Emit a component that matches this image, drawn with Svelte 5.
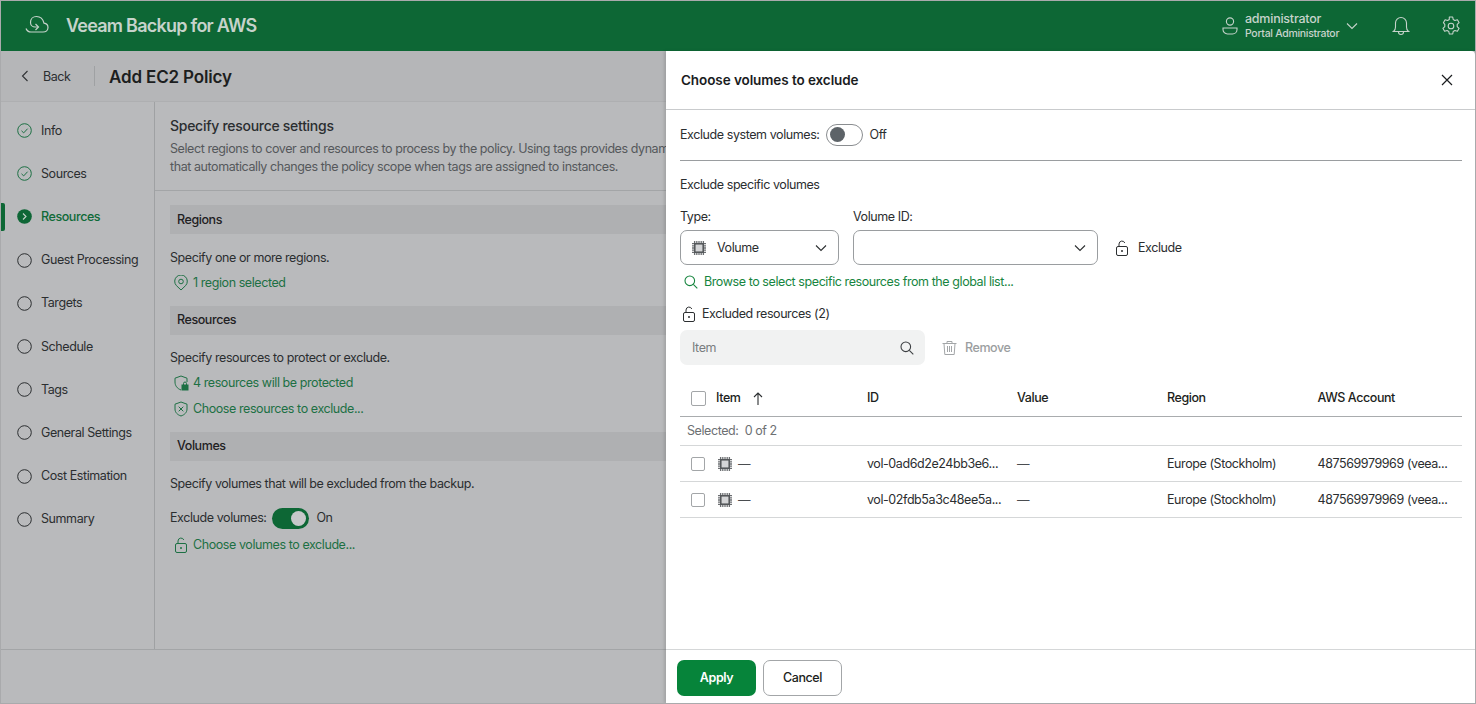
<script>
  const steps = [
    { label: 'Info', state: 'done' },
    { label: 'Sources', state: 'done' },
    { label: 'Resources', state: 'active' },
    { label: 'Guest Processing', state: '' },
    { label: 'Targets', state: '' },
    { label: 'Schedule', state: '' },
    { label: 'Tags', state: '' },
    { label: 'General Settings', state: '' },
    { label: 'Cost Estimation', state: '' },
    { label: 'Summary', state: '' }
  ];
  const rows = [
    { id: 'vol-0ad6d2e24bb3e6...' },
    { id: 'vol-02fdb5a3c48ee5a...' }
  ];
</script>

{#snippet chip()}
  <svg class="ic" width="16" height="16" viewBox="0 0 16 16" fill="none">
    <path d="M3.500 1v2.500M5.300 1v2.500M7.100 1v2.500M8.900 1v2.500M10.700 1v2.500M12.500 1v2.500M3.500 12.500V15M5.300 12.500V15M7.100 12.500V15M8.900 12.500V15M10.700 12.500V15M12.500 12.500V15M1 3.500h2.500M1 5.300h2.500M1 7.100h2.500M1 8.900h2.500M1 10.700h2.500M1 12.500h2.500M12.500 3.500H15M12.500 5.300H15M12.500 7.100H15M12.500 8.900H15M12.500 10.700H15M12.500 12.500H15" stroke="#6b6e71" stroke-width="1.100"/>
    <rect x="3.800" y="3.800" width="8.400" height="8.400" stroke="#4f5255" stroke-width="1.500" fill="#d4d5d7"/>
  </svg>
{/snippet}

{#snippet lock(color)}
  <svg class="ic" width="16" height="16" viewBox="0 0 16 16" fill="none" stroke={color}>
    <rect x="2.500" y="6.500" width="11" height="9" rx="1.500"/>
    <path d="M5 6.500V4a3 3 0 0 1 5.800-1"/>
    <circle cx="8" cy="11" r="1" fill={color} stroke="none"/>
  </svg>
{/snippet}

{#snippet chevron(color)}
  <svg class="ic" width="12" height="8" viewBox="0 0 12 8" fill="none" stroke={color} stroke-width="1.100"><path d="M1 1.500l5 5 5-5"/></svg>
{/snippet}

{#snippet search(color)}
  <svg class="ic" width="14" height="14" viewBox="0 0 14 14" fill="none" stroke={color} stroke-width="1.100"><circle cx="5.800" cy="5.800" r="4.800"/><path d="M9.300 9.300l4 4"/></svg>
{/snippet}

<div class="app">
  <header class="top">
    <svg class="logo" width="26" height="22" viewBox="0 0 26 22" fill="none" stroke="#c6d3cb" stroke-width="1.200">
      <path d="M1 13.500C2 16 3.500 17 6 17h12c3 0 5-2 5-4.500 0-2.500-1.800-4-4-4.300C18 4 15 1.500 11.500 1.500 8 1.500 5.500 4 5.500 7.500 5.500 10.500 8 12 10 12h3"/>
      <path d="M10.500 9l3 3-3 3"/>
    </svg>
    <div class="brand">Veeam Backup for AWS</div>
    <div class="user">
      <svg width="16" height="18" viewBox="0 0 16 18" fill="none" stroke="#c6d3cb" stroke-width="1.100">
        <circle cx="8" cy="4.500" r="3.600"/>
        <path d="M1 11h14v1.500a4.500 4.500 0 0 1-4.500 4.500h-5A4.500 4.500 0 0 1 1 12.500z"/>
      </svg>
      <div class="who">
        <div class="name">administrator</div>
        <div class="role">Portal Administrator</div>
      </div>
      {@render chevron('#c6d3cb')}
    </div>
    <svg class="bell" width="18" height="20" viewBox="0 0 18 20" fill="none" stroke="#c6d3cb" stroke-width="1.100">
      <path d="M1.500 15.500c1.500-1 2-2 2-4.500V7a5.500 5.500 0 0 1 11 0v4c0 2.500.5 3.500 2 4.500z"/>
      <path d="M6.500 15.500v.5a2.500 2.500 0 0 0 5 0v-.5"/>
    </svg>
    <svg class="gear" width="20" height="20" viewBox="0 0 20 20" fill="none" stroke="#c6d3cb" stroke-width="1.100">
      <circle cx="10" cy="10" r="2.800"/>
      <path d="M8.300 1h3.400l.5 2.500 1.700 1 2.500-.8 1.700 3-1.900 1.700v2.200l1.900 1.700-1.700 3-2.500-.8-1.700 1-.5 2.500H8.300l-.5-2.500-1.700-1-2.500.8-1.700-3 1.900-1.700V8.400L2.400 6.700l1.700-3 2.500.8 1.700-1z" stroke-linejoin="round"/>
    </svg>
  </header>

  <div class="sub">
    <div class="back">
      <svg width="8" height="12" viewBox="0 0 8 12" fill="none" stroke="#2f3234" stroke-width="1.100"><path d="M6.500 1L1.500 6l5 5"/></svg>
      <span>Back</span>
    </div>
    <div class="sep"></div>
    <h1>Add EC2 Policy</h1>
  </div>

  <div class="body">
    <nav class="side">
      {#each steps as s}
        <div class="step {s.state}">
          {#if s.state === 'done'}
            <svg width="15" height="15" viewBox="0 0 15 15" fill="none" stroke="#1d7044"><circle cx="7.500" cy="7.500" r="6.800"/><path d="M4.500 7.800l2.200 2.100 3.900-4.200"/></svg>
          {:else if s.state === 'active'}
            <svg width="15" height="15" viewBox="0 0 15 15"><circle cx="7.500" cy="7.500" r="7.300" fill="#0e6636"/><path d="M6 4.500l3 3-3 3" fill="none" stroke="#c6d3cb" stroke-width="1.100"/></svg>
          {:else}
            <svg width="15" height="15" viewBox="0 0 15 15" fill="none" stroke="#2c2f31"><circle cx="7.500" cy="7.500" r="6.800"/></svg>
          {/if}
          <span>{s.label}</span>
        </div>
      {/each}
    </nav>

    <main class="main">
      <div class="intro">
        <h2>Specify resource settings</h2>
        <p>Select regions to cover and resources to process by the policy. Using tags provides dynamic protection scope<br/>that automatically changes the policy scope when tags are assigned to instances.</p>
      </div>
      <div class="form">
        <div class="bar">Regions</div>
        <div class="line lead">Specify one or more regions.</div>
        <div class="link first">
          <svg width="16" height="16" viewBox="0 0 16 16" fill="none" stroke="#1d7044"><path d="M8 15l-4.700-4.500a6.300 6.300 0 1 1 9.400 0z"/><circle cx="8" cy="6.500" r="2.300"/></svg>
          1 region selected
        </div>
        <div class="bar b2">Resources</div>
        <div class="line">Specify resources to protect or exclude.</div>
        <div class="link first">
          <svg width="16" height="16" viewBox="0 0 16 16" fill="none" stroke="#1d7044"><path d="M8 1l6 2.200V7M8 15C4 13.500 2 10.500 2 7V3.200L8 1"/><rect x="9" y="10" width="6" height="5" fill="#1d7044"/><path d="M10.500 10V8.500a1.500 1.500 0 0 1 3 0V10"/></svg>
          4 resources will be protected
        </div>
        <div class="link">
          <svg width="16" height="16" viewBox="0 0 16 16" fill="none" stroke="#1d7044"><path d="M8 1l6 2.200V8c0 3.500-2.500 5.800-6 7-3.500-1.200-6-3.500-6-7V3.200z"/><path d="M5.700 5.700l4.600 4.600M10.300 5.700l-4.600 4.600"/></svg>
          Choose resources to exclude...
        </div>
        <div class="bar b2">Volumes</div>
        <div class="line">Specify volumes that will be excluded from the backup.</div>
        <div class="tg">
          <span>Exclude volumes:</span>
          <span class="switch on"><i></i></span>
          <span>On</span>
        </div>
        <div class="link">
          {@render lock('#1d7044')}
          Choose volumes to exclude...
        </div>
      </div>
    </main>
  </div>
  <div class="foot"></div>

  <aside class="drawer">
    <div class="dh">
      <h3>Choose volumes to exclude</h3>
      <svg width="12" height="12" viewBox="0 0 12 12" fill="none" stroke="#1b1d1f" stroke-width="1.200"><path d="M1 1l10 10M11 1L1 11"/></svg>
    </div>
    <div class="dc">
      <div class="tgl">
        <span>Exclude system volumes:</span>
        <span class="switch off"><i></i></span>
        <span>Off</span>
      </div>
      <div class="sect">Exclude specific volumes</div>
      <div class="fields">
        <label class="f1">
          <span>Type:</span>
          <div class="sel">
            {@render chip()}
            <b>Volume</b>
            {@render chevron('#2c2f31')}
          </div>
        </label>
        <label class="f2">
          <span>Volume ID:</span>
          <div class="sel">
            <b></b>
            {@render chevron('#2c2f31')}
          </div>
        </label>
        <div class="excl">
          {@render lock('#2c2f31')}
          Exclude
        </div>
      </div>
      <div class="browse">
        {@render search('#17853f')}
        Browse to select specific resources from the global list...
      </div>
      <div class="exh">
        {@render lock('#2c2f31')}
        Excluded resources (2)
      </div>
      <div class="tools">
        <div class="sb">
          <span>Item</span>
          {@render search('#3c3f42')}
        </div>
        <div class="rm">
          <svg width="15" height="16" viewBox="0 0 15 16" fill="none" stroke="#a3a6a8"><path d="M.5 3.500h14M5 3.500V1.500h5v2M2 3.500l.8 11h9.400l.8-11M5.500 6v6M7.500 6v6M9.500 6v6"/></svg>
          Remove
        </div>
      </div>
      <div class="tr th">
        <div class="c0"><span class="cb big"></span><span>Item</span>
          <svg class="up" width="10" height="13" viewBox="0 0 10 13" fill="none" stroke="#2c2f31" stroke-width="1.100"><path d="M5 13V1M1 5l4-4 4 4"/></svg>
        </div>
        <div class="c">ID</div><div class="c">Value</div><div class="c">Region</div><div class="c">AWS Account</div>
      </div>
      <div class="selrow">Selected:&nbsp; 0 of 2</div>
      {#each rows as r}
        <div class="tr row">
          <div class="c0"><span class="cb"></span>{@render chip()}<span class="dash">—</span></div>
          <div class="c">{r.id}</div><div class="c dash">—</div><div class="c">Europe (Stockholm)</div><div class="c">487569979969 (veea...</div>
        </div>
      {/each}
    </div>
    <div class="df">
      <button class="apply">Apply</button>
      <button class="cancel">Cancel</button>
    </div>
  </aside>
</div>

<style>
  :global(body) { margin: 0; }
  * { box-sizing: border-box; }
  .app {
    position: relative; width: 1476px; height: 704px; overflow: hidden;
    border: 1px solid #a9aaac;
    display: flex; flex-direction: column;
    font: 400 12.500px/16px Inter, "Liberation Sans", sans-serif; letter-spacing: -0.42px; color: #2b2e30;
    background: #b9babc;
  }
  svg { display: block; flex: none; }
  .top { height: 50px; flex: none; background: #0d6735; display: flex; align-items: center; color: #c6d3cb; }
  .logo { margin-left: 24px; }
  .brand { margin-left: 15px; font-size: 18px; font-weight: 600; letter-spacing: -0.75px; }
  .user { margin-left: auto; display: flex; align-items: center; }
  .who { margin-left: 7px; width: 101px; }
  .name { font-size: 12.500px; line-height: 16px; font-weight: 500; letter-spacing: -0.23px; }
  .role { font-size: 10.500px; line-height: 14px; font-weight: 500; white-space: nowrap; letter-spacing: -0.3px; }
  .bell { margin-left: 34px; }
  .gear { margin-left: 31px; margin-right: 14px; }

  .sub { height: 51px; flex: none; display: flex; align-items: center; background: #b5b6b8; border-bottom: 1px solid #aeafb1; }
  .back { display: flex; align-items: center; margin-left: 20px; gap: 14px; width: 73px; }
  .back span { margin-top: 1px; }
  .sep { width: 1px; height: 20px; background: #9fa1a3; }
  h1 { margin: 1px 0 0 14px; font-size: 17px; line-height: 20px; font-weight: 600; color: #1c1e20; letter-spacing: -0.15px; }

  .body { flex: 1; display: flex; min-height: 0; }
  .side { width: 154px; flex: none; border-right: 1px solid #9fa1a3; padding-top: 7px; position: relative; }
  .step { height: 43.200px; display: flex; align-items: center; padding-left: 16px; gap: 9px; position: relative; }
  .step.active { color: #0f6a38; font-weight: 500; }
  .step.active::before { content: ''; position: absolute; left: 0; top: 8px; bottom: 8px; width: 4px; border-radius: 0 2px 2px 0; background: #0d6735; }

  .main { flex: 1; min-width: 0; }
  .intro { padding: 15px 15px 0; height: 89px; border-bottom: 1px solid #a3a5a7; white-space: nowrap; }
  h2 { margin: 0; font-size: 14px; line-height: 18px; font-weight: 500; color: #2b2e30; letter-spacing: -0.28px; }
  .intro p { margin: 5px 0 0; line-height: 18px; color: #55585b; }
  .form { padding: 14px 15px 0; }
  .bar { height: 29px; line-height: 29px; padding-left: 7px; background: #afb0b2; font-weight: 500; color: #1f2123; }
  .b2 { margin-top: 15px; line-height: 28px; }
  .line { margin-top: 15px; line-height: 16px; }
  .line.lead { margin-top: 16px; }
  .link { display: flex; align-items: center; gap: 4px; color: #1d7044; height: 16px; margin-top: 10px; padding-left: 3px; }
  .link.first { margin-top: 9px; }
  .tg { display: flex; align-items: center; gap: 6px; height: 22px; margin-top: 15px; }
  .tg + .link { margin-top: 8px; }
  .switch { width: 37px; height: 21px; border-radius: 11px; position: relative; display: inline-block; flex: none; margin-right: 1px; }
  .switch i { position: absolute; top: 3px; width: 15px; height: 15px; border-radius: 50%; }
  .switch.on { background: #0d6735; }
  .switch.on i { right: 3px; background: #c6c8c9; }
  .switch.off { background: #fff; border: 1px solid #8a8d90; }
  .switch.off i { left: 3px; top: 2px; background: #5d6368; }

  .drawer {
    position: absolute; right: 0; top: 50px; bottom: 0; width: 809px; background: #fff;
    display: flex; flex-direction: column; border-top-right-radius: 4px;
    box-shadow: -2px 0 3px rgba(0,0,0,.12);
  }
  .dh { height: 59px; flex: none; display: flex; align-items: center; justify-content: space-between; padding: 0 22px 0 15px; border-bottom: 1px solid #c9cbcd; }
  h3 { margin: 0; font-size: 13.500px; font-weight: 600; color: #1a1c1e; letter-spacing: -0.08px; }
  .dc { flex: 1; padding: 0 13px 0 14px; min-height: 0; color: #2b2e30; }
  .tgl { display: flex; align-items: center; gap: 6px; height: 51px; border-bottom: 1px solid #9a9da0; padding-bottom: 1px; }
  .tgl .switch { height: 22px; }
  .sect { margin-top: 16px; }
  .fields { display: flex; align-items: flex-end; margin-top: 16px; }
  .fields label { display: block; }
  .fields label > span { display: block; margin-bottom: 5px; }
  .f1 { width: 159px; margin-right: 14px; }
  .f2 { width: 245px; margin-right: 16px; }
  .sel { height: 35px; border: 1px solid #9a9da0; border-radius: 7px; display: flex; align-items: center; padding: 0 11px 0 10px; gap: 10px; }
  .sel b { flex: 1; font-weight: 400; }
  .excl { display: flex; align-items: center; gap: 8px; height: 35px; }
  .browse { display: flex; align-items: center; gap: 6px; margin-top: 9px; padding-left: 4px; color: #17853f; height: 16px; }
  .exh { display: flex; align-items: center; gap: 5px; margin-top: 16px; height: 16px; padding-left: 1px; }
  .tools { display: flex; align-items: center; margin-top: 8px; }
  .sb { width: 245px; height: 35px; border-radius: 7px; background: #f1f2f2; display: flex; align-items: center; justify-content: space-between; padding: 0 11px 0 12px; color: #7a7d80; }
  .rm { display: flex; align-items: center; gap: 8px; margin-left: 17px; color: #9b9ea0; font-weight: 500; }
  .tr { display: grid; grid-template-columns: 187px 150px 150px 150.500px 1fr; align-items: center; border-bottom: 1px solid #d5d7d8; white-space: nowrap; }
  .th { height: 52px; padding-top: 15px; font-weight: 500; color: #1c1e20; border-bottom-color: #a9acae; }
  .row { height: 36px; }
  .c0 { display: flex; align-items: center; padding-left: 11px; }
  .cb { width: 14px; height: 14px; border: 1px solid #a3a6a8; border-radius: 2px; margin-right: 12px; flex: none; }
  .cb.big { width: 15px; height: 15px; margin-right: 10px; }
  .up { margin-left: 12px; }
  .selrow { height: 29px; line-height: 27px; padding-left: 7px; color: #6d7073; border-bottom: 1px solid #d5d7d8; }
  .dash { color: #4a4d50; }
  .c0 .dash { margin-left: 5px; }
  .df { height: 54px; flex: none; display: flex; align-items: center; gap: 7px; padding: 2px 0 0 11px; border-top: 1px solid #d5d7d8; }
  button { height: 36px; width: 79px; border-radius: 7px; font: 500 12.500px/16px Inter, "Liberation Sans", sans-serif; letter-spacing: -0.42px; padding: 0; }
  .apply { background: #06843a; border: none; color: #fff; font-weight: 600; }
  .cancel { background: #fff; border: 1px solid #a3a6a8; color: #1c1e20; }
  .foot { height: 54px; flex: none; border-top: 1px solid #a3a5a7; background: #b9babc; }
</style>
